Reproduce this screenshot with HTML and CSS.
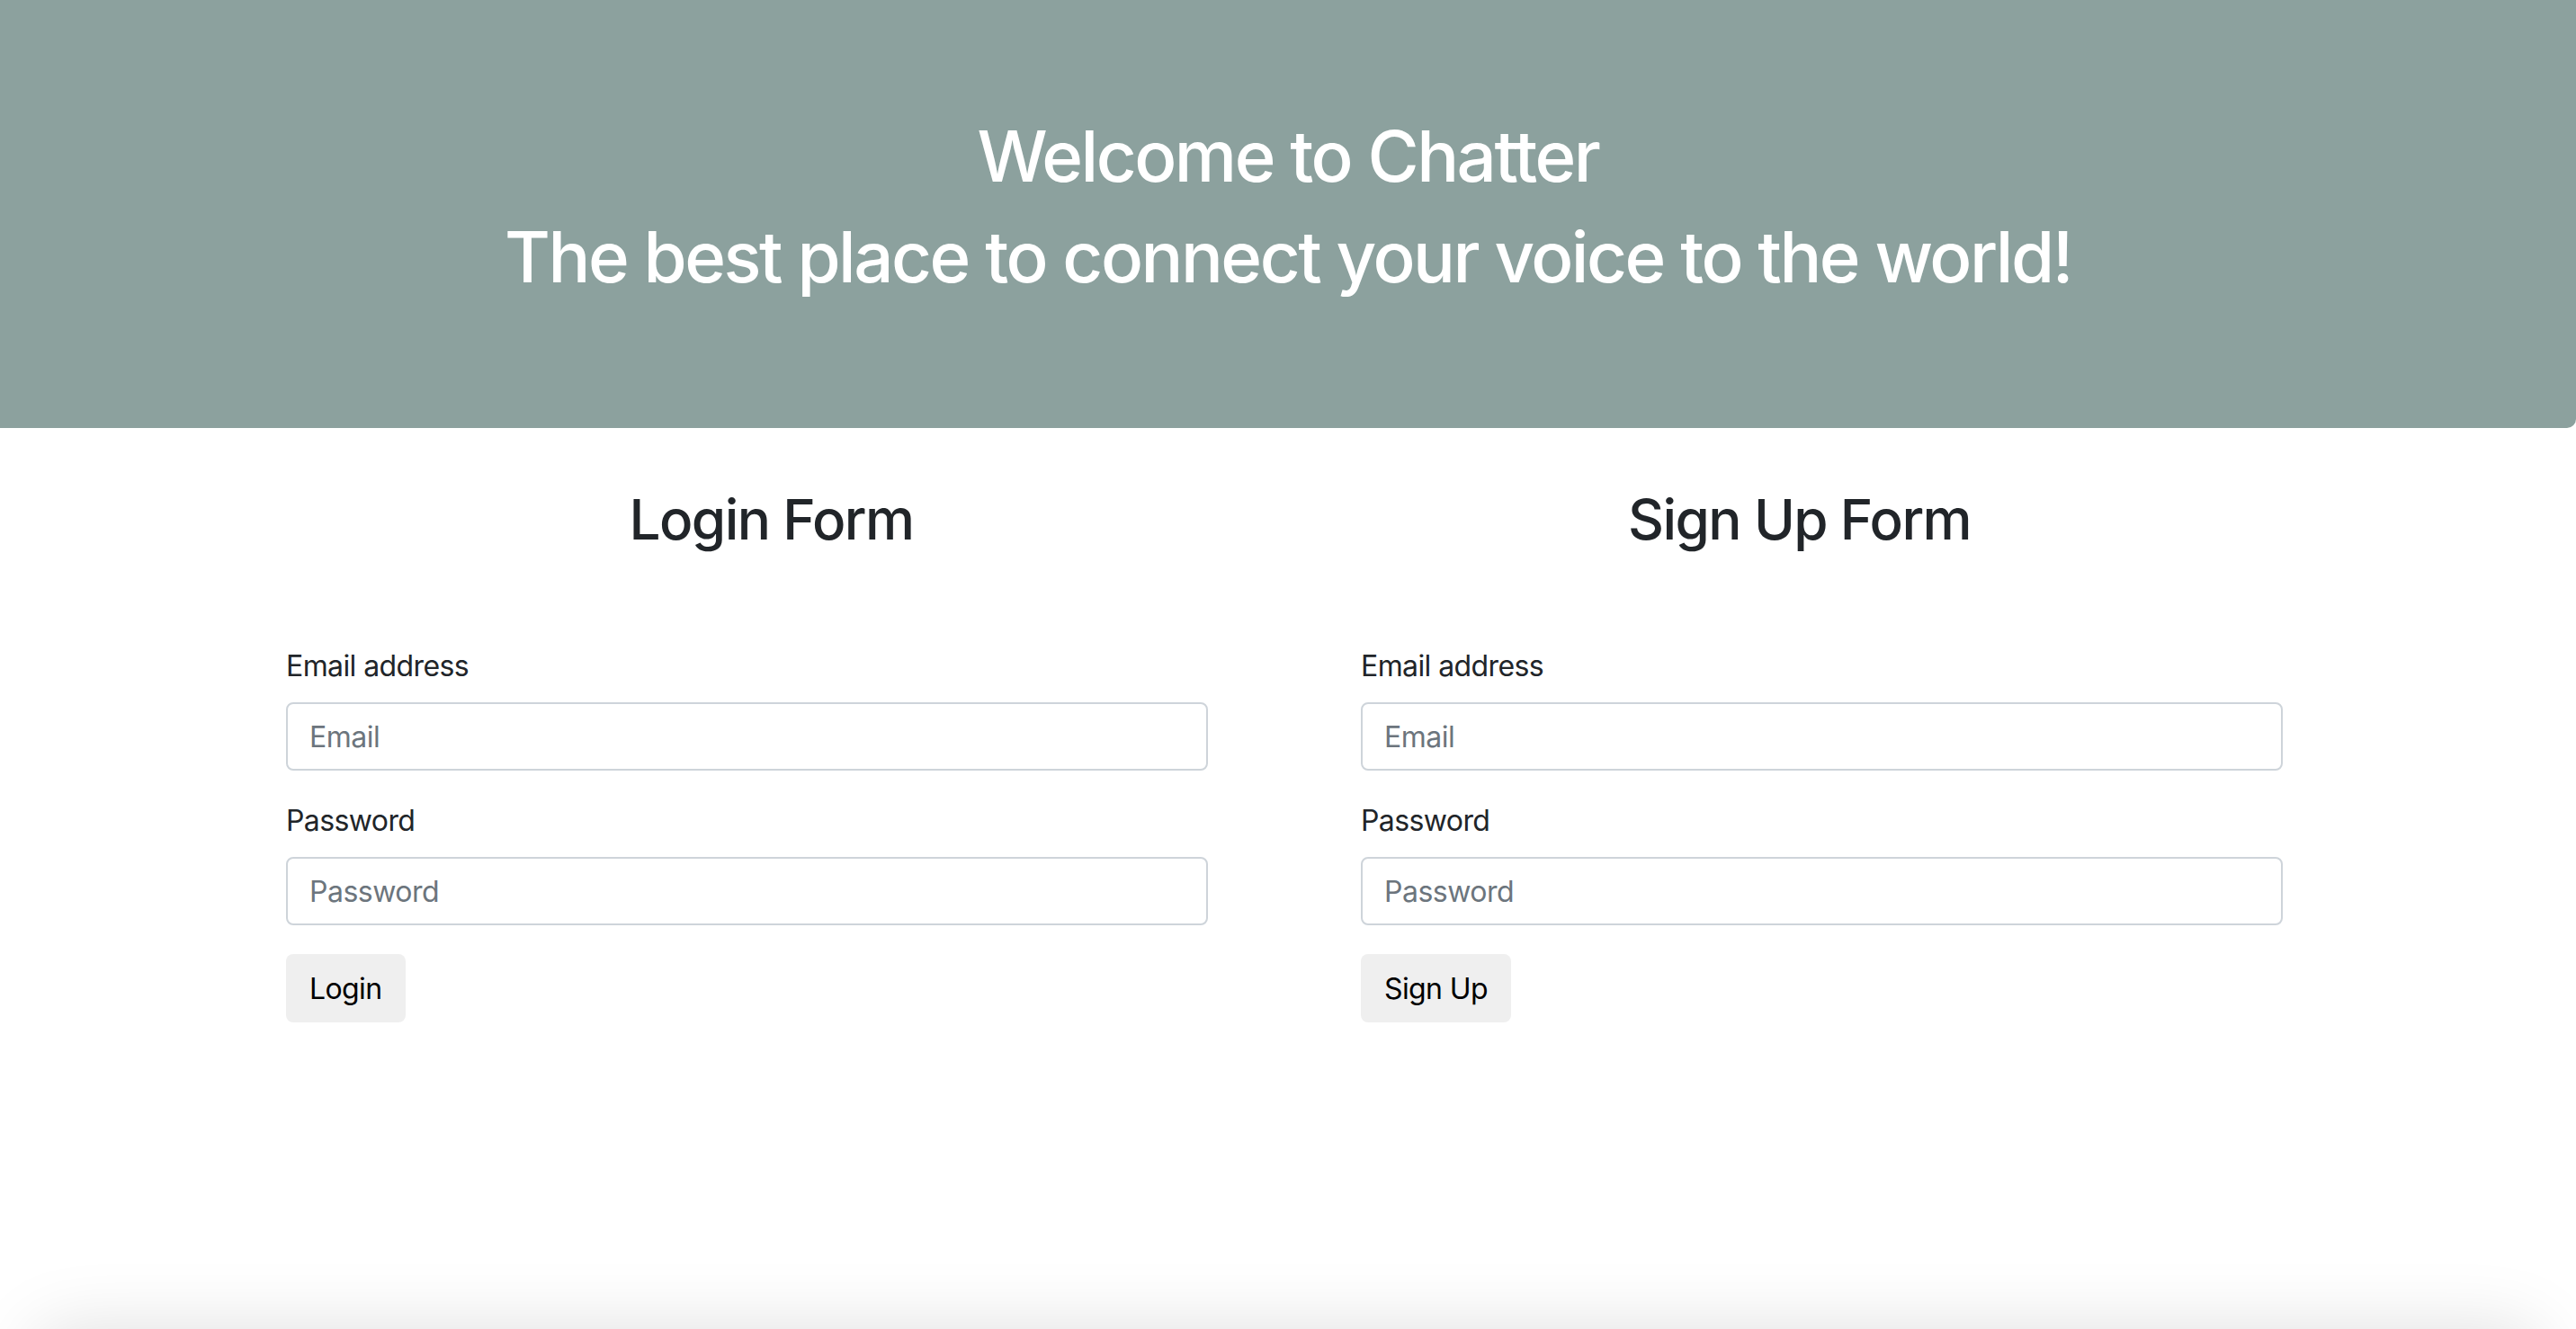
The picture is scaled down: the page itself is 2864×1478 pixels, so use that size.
FILE: index.html
```html
<!DOCTYPE html>
<html lang="en">
<head>
<meta charset="utf-8">
<title>Chatter</title>
<link rel="stylesheet" href="styles.css">
</head>
<body>
<header class="hero">
  <h1 class="hero-title">Welcome to Chatter</h1>
  <h1 class="hero-title">The best place to connect your voice to the world!</h1>
</header>
<main class="forms">
  <section class="col col-left">
    <h2 class="col-title">Login Form</h2>
    <form class="form">
      <div class="field">
        <label class="field-label" for="login-email">Email address</label>
        <input class="field-input" id="login-email" type="email" placeholder="Email">
      </div>
      <div class="field">
        <label class="field-label" for="login-password">Password</label>
        <input class="field-input" id="login-password" type="password" placeholder="Password">
      </div>
      <button class="btn" type="button">Login</button>
    </form>
  </section>
  <section class="col col-right">
    <h2 class="col-title">Sign Up Form</h2>
    <form class="form">
      <div class="field">
        <label class="field-label" for="signup-email">Email address</label>
        <input class="field-input" id="signup-email" type="email" placeholder="Email">
      </div>
      <div class="field">
        <label class="field-label" for="signup-password">Password</label>
        <input class="field-input" id="signup-password" type="password" placeholder="Password">
      </div>
      <button class="btn" type="button">Sign Up</button>
    </form>
  </section>
</main>
<div class="dock"></div>
</body>
</html>
```
FILE: styles.css
```css
* { box-sizing: border-box; }

html, body {
  margin: 0;
  padding: 0;
  background: #ffffff;
  overflow: hidden;
}

body {
  font-family: Inter, "Liberation Sans", sans-serif;
  color: #212529;
  height: 1478px;
}

.hero {
  background: #8ca19e;
  color: #ffffff;
  text-align: center;
  padding: 126px 0 126px;
  border-bottom-right-radius: 10px;
}

.hero-title {
  margin: 0 0 16px;
  font-size: 78px;
  line-height: 96px;
  font-weight: 500;
  letter-spacing: -2.5px;
}

.forms {
  display: flex;
  gap: 170px;
  padding-left: 318px;
}

.col {
  width: 1025px;
  display: flex;
  flex-direction: column;
}

.col-title {
  margin: 63px 0 101px;
  font-size: 62px;
  line-height: 77px;
  font-weight: 500;
  text-align: center;
  letter-spacing: -1.6px;
}

.col-left .col-title { padding-left: 54px; }
.col-right .col-title { padding-right: 50px; }

.form {
  display: flex;
  flex-direction: column;
  align-items: flex-start;
}

.field {
  width: 100%;
  margin-bottom: 32px;
}

.field-label {
  display: block;
  font-size: 32px;
  line-height: 48px;
  margin-bottom: 16px;
  letter-spacing: -0.6px;
}

.field-input {
  display: block;
  width: 100%;
  height: 76px;
  padding: 0 24px;
  border: 2px solid #ced4da;
  border-radius: 8px;
  font-family: inherit;
  font-size: 32px;
  color: #212529;
  background: #ffffff;
  outline: none;
  letter-spacing: -0.5px;
}

.field-input::placeholder {
  color: #6c757d;
  opacity: 1;
}

.btn {
  height: 76px;
  padding: 0 24px;
  border: 2px solid transparent;
  border-radius: 8px;
  background: #efefef;
  color: #000000;
  font-family: inherit;
  font-size: 32px;
  letter-spacing: -0.6px;
  cursor: pointer;
}

.dock {
  position: fixed;
  left: 40px;
  right: 40px;
  bottom: -200px;
  height: 200px;
  background: #ffffff;
  box-shadow: 0 0 80px rgba(0, 0, 0, 0.13);
  border-radius: 30px;
}
```
